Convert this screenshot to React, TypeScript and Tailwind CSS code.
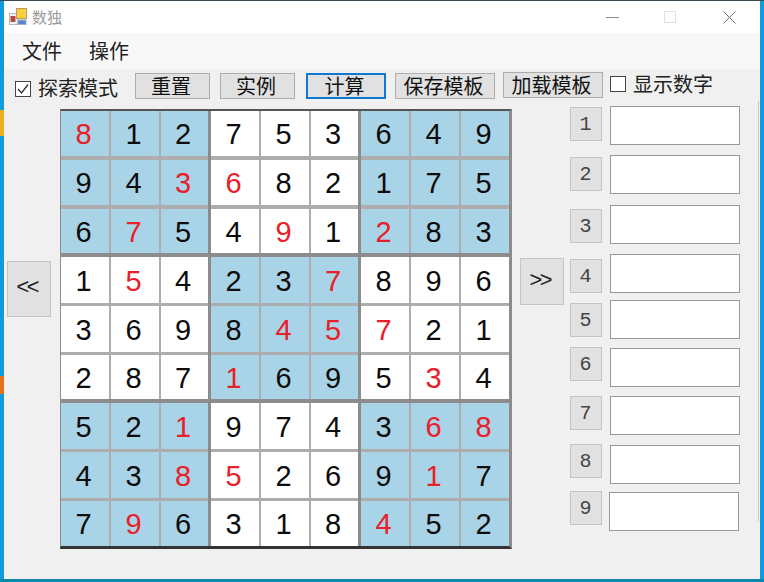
import React from 'react';

const cjk = { fontFamily: '"Noto Sans CJK SC", sans-serif' };

// value, red flag: "r" marks the red digits
const board: string[][] = [
  ['r8', '1', '2', '7', '5', '3', '6', '4', '9'],
  ['9', '4', 'r3', 'r6', '8', '2', '1', '7', '5'],
  ['6', 'r7', '5', '4', 'r9', '1', 'r2', '8', '3'],
  ['1', 'r5', '4', '2', '3', 'r7', '8', '9', '6'],
  ['3', '6', '9', '8', 'r4', 'r5', 'r7', '2', '1'],
  ['2', '8', '7', 'r1', '6', '9', '5', 'r3', '4'],
  ['5', '2', 'r1', '9', '7', '4', '3', 'r6', 'r8'],
  ['4', '3', 'r8', 'r5', '2', '6', '9', 'r1', '7'],
  ['7', 'r9', '6', '3', '1', '8', 'r4', '5', '2'],
];

const blockRowClass = [
  'grid-rows-[45px_45px_44px] gap-y-[4px]',
  'grid-rows-[46px_46px_44px] gap-y-[3px]',
  'grid-rows-[46px_46px_45px] gap-y-[3px]',
];

const sideRows = [
  { n: '1', rowClass: 'mt-0', btnClass: 'mt-px', boxClass: 'ml-2' },
  { n: '2', rowClass: 'mt-[10px]', btnClass: 'mt-[2px]', boxClass: 'ml-2' },
  { n: '3', rowClass: 'mt-[11px]', btnClass: 'mt-[4px]', boxClass: 'ml-2' },
  { n: '4', rowClass: 'mt-[10px]', btnClass: 'mt-[5px]', boxClass: 'ml-2' },
  { n: '5', rowClass: 'mt-[7px]', btnClass: 'mt-[3px]', boxClass: 'ml-2' },
  { n: '6', rowClass: 'mt-[9px]', btnClass: '-mt-px', boxClass: 'ml-2' },
  { n: '7', rowClass: 'mt-[9px]', btnClass: 'mt-0', boxClass: 'ml-2' },
  { n: '8', rowClass: 'mt-[10px]', btnClass: '-mt-px', boxClass: 'ml-2' },
  { n: '9', rowClass: 'mt-[8px]', btnClass: '-mt-px', boxClass: 'ml-[7px]' },
];

const ToolButton: React.FC<{ label: string; className: string }> = ({ label, className }) => (
  <button
    className={`h-[26px] shrink-0 bg-[#e1e1e1] text-[20px] leading-none text-[#111] flex items-center justify-center pr-[3px] pb-px ${className}`}
    style={cjk}
  >
    {label}
  </button>
);

const Cell: React.FC<{ value: string; row: number; col: number }> = ({ value, row, col }) => {
  const isRed = value.startsWith('r');
  const digit = isRed ? value.slice(1) : value;
  const blue = (Math.floor(row / 3) + Math.floor(col / 3)) % 2 === 0;
  return (
    <div
      className={`flex items-center justify-center pr-[3px] pt-[2px] text-[29px] leading-none font-['Liberation_Sans',sans-serif] ${
        blue ? 'bg-[#a9d3e6]' : 'bg-white'
      } ${isRed ? 'text-[#e8202a]' : 'text-[#0c0c0c]'}`}
    >
      {digit}
    </div>
  );
};

const Block: React.FC<{ blockRow: number; blockCol: number }> = ({ blockRow, blockCol }) => {
  const cells = [];
  for (let r = blockRow * 3; r < blockRow * 3 + 3; r++) {
    for (let c = blockCol * 3; c < blockCol * 3 + 3; c++) {
      cells.push(<Cell key={`${r}-${c}`} value={board[r][c]} row={r} col={c} />);
    }
  }
  return (
    <div className={`grid grid-cols-[48px_48px_1fr] gap-x-[2px] bg-[#adadad] ${blockRowClass[blockRow]}`}>
      {cells}
    </div>
  );
};

export default function App() {
  return (
    <div className="relative w-[764px] h-[582px] overflow-hidden bg-[#0f9bdc] pl-1 pt-px">
      {/* desktop peeking out at the edges */}
      <div className="absolute left-0 top-[110px] w-1 h-[26px] bg-[#e8b020]" />
      <div className="absolute left-0 top-[376px] w-1 h-[18px] bg-[#e8701c]" />
      <div className="absolute left-0 bottom-0 w-full h-[3px] bg-[#0b87ad]" />
      <div className="absolute left-0 top-0 w-full h-px bg-[#3b4a52]" />

      <div className="relative w-[756px] h-[578px] bg-[#f0f0f0] flex flex-col">
        <div className="h-[32px] bg-white flex items-center shrink-0">
          <svg className="ml-[5px]" width="18" height="18" viewBox="0 0 18 18">
            <rect x="0.5" y="5.5" width="8" height="11" fill="#f4f4f4" stroke="#b8b8b8" />
            <rect x="1.5" y="8" width="5" height="6" fill="#b8483c" />
            <rect x="7.5" y="0.5" width="10" height="10" fill="#f6d040" stroke="#b8a050" />
            <rect x="9" y="12" width="8" height="4.5" fill="#5a86c8" stroke="#9ab0d0" />
          </svg>
          <span className="ml-[5px] pb-[2px] text-[15px] leading-none text-[#9a9a9a]" style={cjk}>数独</span>
          <div className="ml-auto flex items-center">
            <div className="w-[13px] h-px bg-[#8a8a8a] mr-[45px]" />
            <div className="w-[12px] h-[12px] border border-[#e2e2e2] mr-[47px]" />
            <svg className="mr-[24px]" width="13" height="13" viewBox="0 0 13 13">
              <path d="M0.5 0.5 L12.5 12.5 M12.5 0.5 L0.5 12.5" stroke="#707070" strokeWidth="1" />
            </svg>
          </div>
        </div>

        <div className="h-[36px] bg-[#f8f8f8] flex items-center pl-[18px] gap-[27px] shrink-0 text-[20px] leading-none text-[#222]" style={cjk}>
          <span>文件</span>
          <span>操作</span>
        </div>

        <div className="h-[37px] flex items-start shrink-0 pl-[11px]">
          <div className="mt-[12px] w-[16px] h-[16px] border border-[#444] bg-white flex items-center justify-center shrink-0">
            <svg width="14" height="14" viewBox="0 0 14 14">
              <path d="M2 7 L5.5 11 L12 2.5" fill="none" stroke="#333" strokeWidth="1.3" />
            </svg>
          </div>
          <span className="ml-[7px] mt-[8px] w-[97px] shrink-0 text-[20px] leading-[22px] text-[#222]" style={cjk}>探索模式</span>
          <ToolButton label="重置" className="mt-[4px] w-[75px] border border-[#adadad]" />
          <ToolButton label="实例" className="mt-[4px] ml-[10px] w-[75px] border border-[#adadad]" />
          <ToolButton label="计算" className="mt-[4px] ml-[11px] w-[80px] border-2 border-[#0f78d0]" />
          <ToolButton label="保存模板" className="mt-[4px] ml-[9px] w-[100px] border border-[#adadad]" />
          <ToolButton label="加载模板" className="mt-[3px] ml-[8px] w-[100px] border border-[#adadad]" />
          <div className="mt-[7px] ml-[7px] w-[16px] h-[16px] border border-[#444] bg-white shrink-0" />
          <span className="ml-[7px] mt-[3px] text-[20px] leading-[24px] text-[#222] whitespace-nowrap" style={cjk}>显示数字</span>
        </div>

        <div className="flex items-start">
          <button className="ml-[3px] mt-[155px] pr-[5px] w-[44px] h-[56px] bg-[#e1e1e1] border border-[#c4c4c4] text-[22px] tracking-[-3px] leading-none text-[#222] font-['Liberation_Mono',monospace] shrink-0">
            &lt;&lt;
          </button>

          <div className="ml-[9px] mt-[3px] w-[452px] shrink-0 border-t-2 border-b-[3px] border-l border-r-[3px] border-t-[#555] border-b-[#333] border-x-[#8c8c8c] bg-[#8c8c8c]">
            <div className="grid grid-cols-[147px_147px_148px] gap-x-[3px] gap-y-[4px]">
              {[0, 1, 2].flatMap((br) =>
                [0, 1, 2].map((bc) => <Block key={`${br}-${bc}`} blockRow={br} blockCol={bc} />)
              )}
            </div>
          </div>

          <button className="ml-[8px] mt-[152px] pr-[5px] w-[44px] h-[47px] bg-[#e1e1e1] border border-[#c4c4c4] text-[22px] tracking-[-3px] leading-none text-[#222] font-['Liberation_Mono',monospace] shrink-0">
            &gt;&gt;
          </button>

          <div className="ml-[6px] flex flex-col shrink-0">
            {sideRows.map((row) => (
              <div key={row.n} className={`flex items-start ${row.rowClass}`}>
                <button
                  className={`w-[32px] h-[34px] pr-px pt-px bg-[#e1e1e1] border border-[#c4c4c4] text-[20px] leading-none text-[#444] font-['Liberation_Mono',monospace] shrink-0 ${row.btnClass}`}
                >
                  {row.n}
                </button>
                <div className={`w-[130px] h-[39px] bg-white border border-[#999] shrink-0 ${row.boxClass}`} />
              </div>
            ))}
          </div>
        </div>

        {/* window edge line on the right */}
        <div className="absolute right-px top-[100px] w-px h-[420px] bg-[#c8c8c8]" />
      </div>
    </div>
  );
}
